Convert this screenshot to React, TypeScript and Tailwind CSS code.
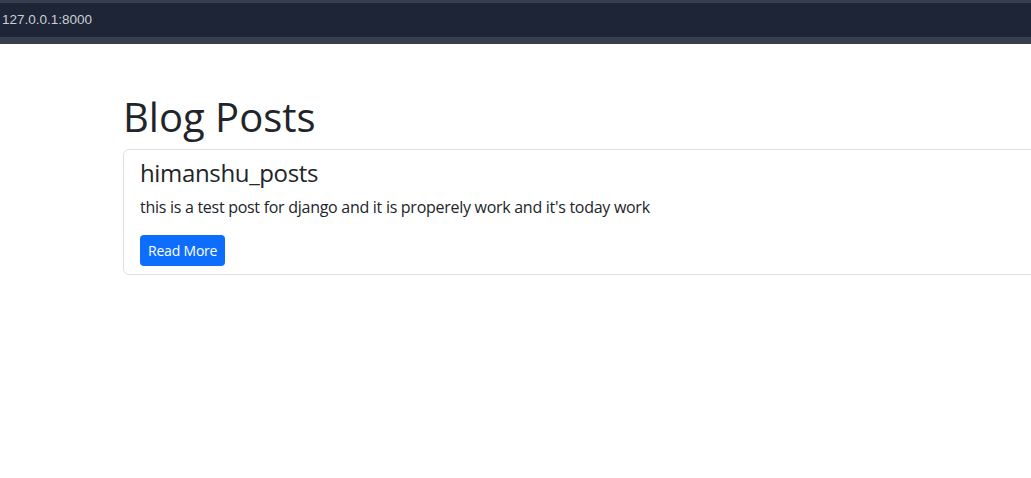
export default function App() {
  const posts = [
    {
      id: 1,
      title: "himanshu_posts",
      body: "this is a test post for django and it is properely work and it's today work",
    },
  ];

  return (
    <div className="w-[1031px] h-[478px] overflow-hidden bg-white text-[#212529] font-['Open_Sans',sans-serif]">
      {/* browser url bar */}
      <div className="flex flex-col">
        <div className="h-[3px] bg-[#373e4e]" />
        <div className="h-[34px] bg-[#1e2537] flex items-center pl-[2px]">
          <span className="text-[13.5px] text-[#c9ced6] font-['Liberation_Sans',sans-serif]">127.0.0.1:8000</span>
        </div>
        <div className="h-[7px] bg-[#373e4e]" />
      </div>

      <div className="pl-[123px] pt-[49px]">
        <h1 className="text-[40px] leading-[48px] mb-2">Blog Posts</h1>
        {posts.map((p) => (
          <div key={p.id} className="w-[1100px] border border-[#dfe0e1] rounded-[6px] px-4 py-2">
            <h4 className="text-[24px] leading-[29px] mb-2 tracking-[-0.35px]">{p.title}</h4>
            <p className="text-[16px] leading-[24px] mb-4 tracking-[-0.28px]">{p.body}</p>
            <a href="#" className="inline-block bg-[#0d6efd] text-white text-[14px] leading-[21px] px-2 py-[5px] rounded-[4px] tracking-[-0.2px]">
              Read More
            </a>
          </div>
        ))}
      </div>
    </div>
  );
}
